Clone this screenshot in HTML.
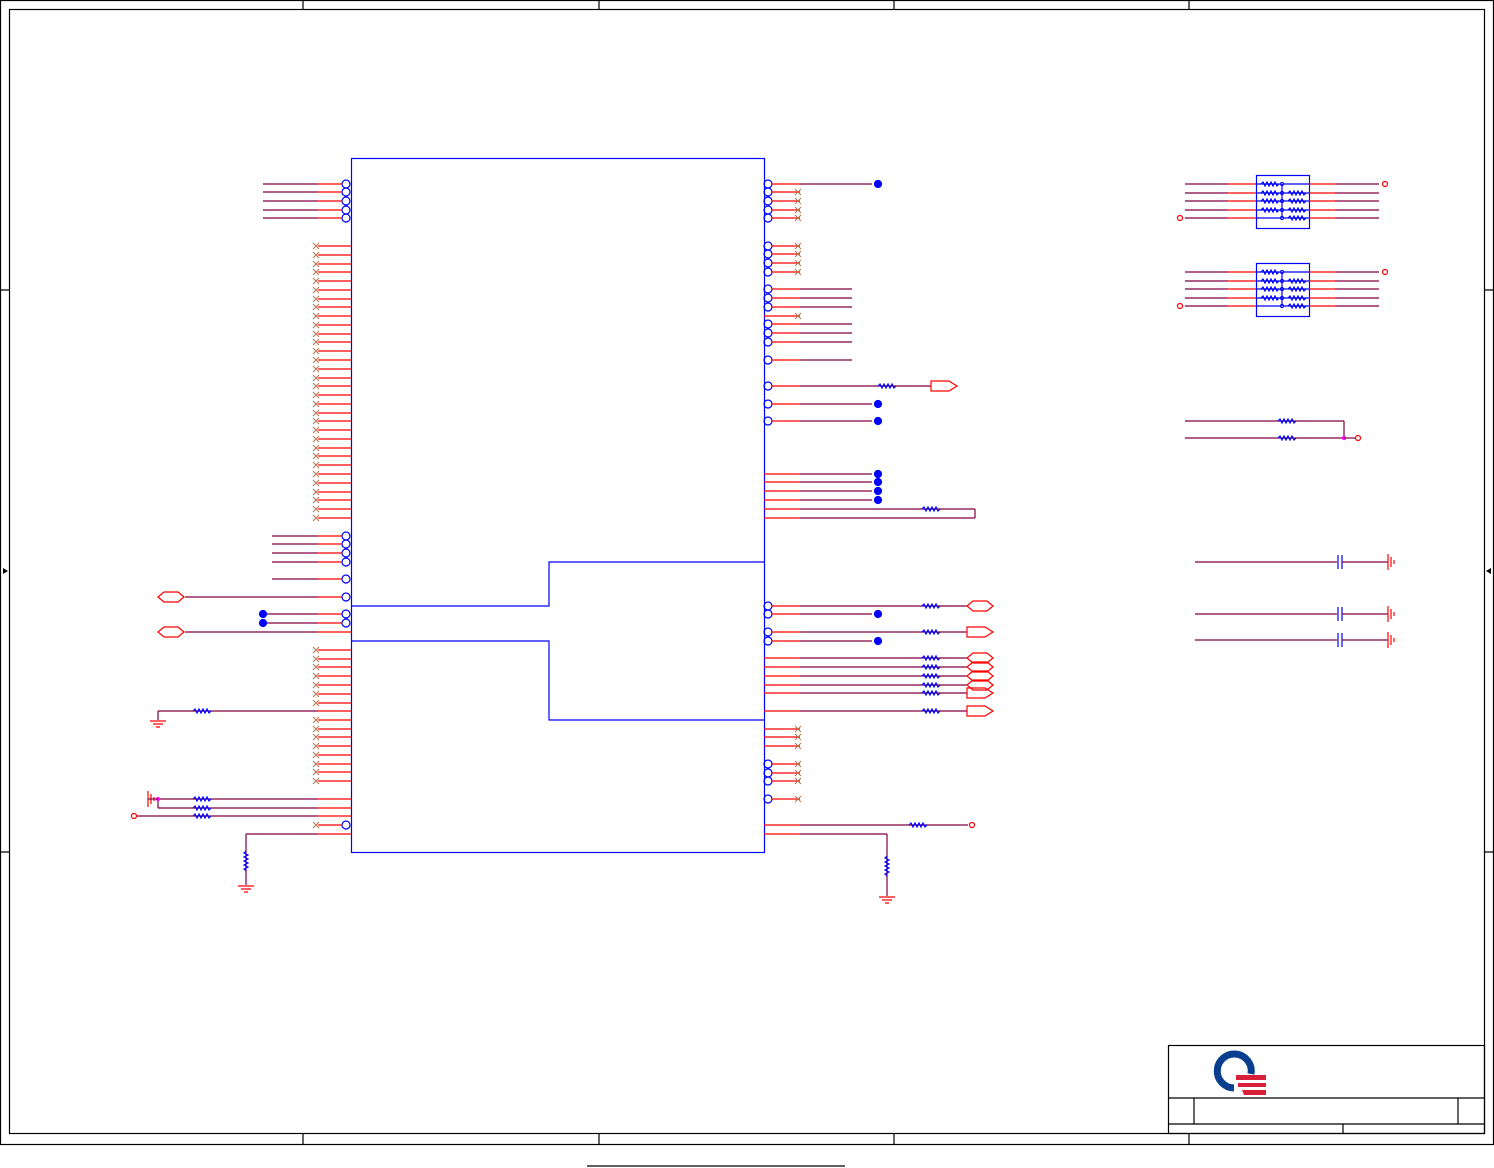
<!DOCTYPE html>
<html><head><meta charset="utf-8"><style>html,body{margin:0;padding:0;background:#fff}svg{display:block}</style></head>
<body>
<svg id="s" width="1494" height="1168" viewBox="0 0 1494 1168" xmlns="http://www.w3.org/2000/svg" fill="none" stroke-width="1">
<g stroke="#000" stroke-width="1.2">
<rect x="0.5" y="0.5" width="1493" height="1144"/>
<rect x="9.5" y="9.5" width="1475" height="1124"/>
<path d="M303 0v9M599 0v9M894 0v9M1189 0v9M303 1133v12M599 1133v12M894 1133v12M1189 1133v12M0 290h9M0 852h9M1485 290h9M1485 852h9M587 1166h258"/>
<rect x="1168.5" y="1045.5" width="316" height="88"/>
<path d="M1168 1098h316M1168 1124h316M1194 1098v26M1458 1098v26M1343 1124v9"/>
</g>
<path d="M3 568l5 3-5 3zM1491 568l-5 3 5 3z" fill="#000"/>
<!-- logo -->
<path d="M1234 1088 A17 17 0 1 1 1251 1074" stroke="#0a3f8f" stroke-width="7"/>
<path d="M1236 1075h30v5h-30zM1238 1083h28v4h-28zM1242 1090h24v5h-22z" fill="#d8203a"/>
<!-- main box -->
<g stroke="#00f" stroke-width="1.2">
<rect x="351.5" y="158.5" width="413" height="694"/>
<path d="M351 606h198v-44h215M351 641h198v79h215"/>
<rect x="1256.5" y="175.5" width="53" height="53"/>
<rect x="1256.5" y="263.5" width="53" height="53"/>
</g>
<g id="g"></g>
</svg>
<script>
const g=document.getElementById('g');const NS='http://www.w3.org/2000/svg';
function el(t,a){const e=document.createElementNS(NS,t);for(const k in a)e.setAttribute(k,a[k]);g.appendChild(e);return e;}
const R='#f00',M='#800040',B='#00f';
function ln(x1,y1,x2,y2,c){el('line',{x1,y1,x2,y2,stroke:c,'stroke-width':1.2});}
function circ(x,y,r,c,f){el('circle',{cx:x,cy:y,r,stroke:c,fill:f||'none','stroke-width':1.2});}
function X(x,y){el('path',{d:`M${x-3} ${y-3}l6 6M${x-3} ${y+3}l6 -6`,stroke:'#b07850','stroke-width':1});}
function res(x,y){el('path',{d:`M${x-9} ${y}l2 -2 2 4 2-4 2 4 2-4 2 4 2-4 2 4 2-2`,stroke:B,'stroke-width':1.2});}
function resV(x,y){el('path',{d:`M${x} ${y-10}l-2 2 4 2-4 2 4 2-4 2 4 2-4 2 4 2-4 2 2 2`,stroke:B,'stroke-width':1.2});}
function hexL(x,y){el('path',{d:`M${x} ${y}l6 -5h14l6 5-6 5h-14z`,stroke:R,'stroke-width':1.2});}
function hexR(x,y){el('path',{d:`M${x} ${y}l6 -5h14l6 5-6 5h-14z`,stroke:R,'stroke-width':1.2});}
function arr(x,y){el('path',{d:`M${x} ${y-5}h18l8 5-8 5h-18z`,stroke:R,'stroke-width':1.2});}
function gnd(x,y){el('path',{d:`M${x-8} ${y}h16M${x-5} ${y+3}h10M${x-2} ${y+6}h4`,stroke:R,'stroke-width':1.2});}
function gndR(x,y){el('path',{d:`M${x} ${y-8}v16M${x+3} ${y-5}v10M${x+6} ${y-2}v4`,stroke:R,'stroke-width':1.2});}
function lpin(y,x0,circle){ if(circle){circ(346,y,4,B);ln(318,y,342,y,R);}else{ln(318,y,351,y,R);} ln(x0,y,318,y,M);}
[184,192,201,210,218].forEach(y=>lpin(y,263,1));
for(let i=0;i<32;i++){let y=Math.round(246+i*8.77);ln(318,y,351,y,R);X(316,y);}
[536,544,553,562].forEach(y=>lpin(y,272,1));lpin(579,272,1);
lpin(597,185,1);hexL(158,597);
[614,623].forEach(y=>{lpin(y,263,1);circ(263,y,3.5,B,B);});
lpin(632,185,0);hexL(158,632);
[650,659,667,676,685,694,703].forEach(y=>{ln(318,y,351,y,R);X(316,y);});
lpin(711,158,0);res(202,711);ln(158,711,158,720,M);gnd(158,721);
for(let i=0;i<8;i++){let y=Math.round(720+i*8.7);ln(318,y,351,y,R);X(316,y);}
lpin(799,158,0);lpin(808,158,0);lpin(816,137,0);[799,808,816].forEach(y=>res(202,y));
ln(158,799,158,808,M);circ(158,799,1.5,'#f0f','#f0f');gndR(148,799);ln(148,799,158,799,M);circ(134,816,2.5,R);
circ(346,825,4,B);ln(318,825,342,825,R);X(316,825);
lpin(834,246,0);ln(246,834,246,885,M);resV(246,861);gnd(246,886);
function rpin(y,x1,circle){ if(circle){circ(768,y,4,B);ln(772,y,800,y,R);}else{ln(764,y,800,y,R);} if(x1>800)ln(800,y,x1,y,M);}
rpin(184,872,1);circ(878,184,3.5,B,B);
[192,201,210,218,246,254,263,272].forEach(y=>{rpin(y,0,1);X(798,y);});
[289,298,307,324,333,342,360].forEach(y=>rpin(y,852,1));
rpin(316,0,0);X(798,316);
rpin(386,931,1);res(887,386);arr(931,386);
[404,421].forEach(y=>{rpin(y,872,1);circ(878,y,3.5,B,B);});
[474,482,491,500].forEach(y=>{rpin(y,872,0);circ(878,y,3.5,B,B);});
rpin(509,975,0);res(931,509);rpin(518,975,0);ln(975,509,975,518,M);
rpin(606,967,1);res(931,606);hexR(967,606);
rpin(614,872,1);circ(878,614,3.5,B,B);
rpin(632,967,1);res(931,632);arr(967,632);
rpin(641,872,1);circ(878,641,3.5,B,B);
[658,667,676,685].forEach(y=>{rpin(y,967,0);res(931,y);hexR(967,y);});
[693,711].forEach(y=>{rpin(y,967,0);res(931,y);arr(967,y);});
[729,737,746].forEach(y=>{rpin(y,0,0);X(798,y);});
[764,773,781,799].forEach(y=>{rpin(y,0,1);X(798,y);});
rpin(825,968,0);res(918,825);circ(972,825,2.5,R);
rpin(834,887,0);ln(887,834,887,896,M);resV(887,866);gnd(887,897);
function net(y0){
 const ys=[y0,y0+9,y0+17,y0+26,y0+34];
 ys.forEach((y,i)=>{ln(1185,y,1228,y,M);ln(1228,y,1256,y,R);ln(1256,y,1309,y,B);ln(1309,y,1335,y,R);ln(1335,y,1379,y,M);});
 ys.forEach((y,i)=>{if(i<4)res(1270,y);if(i>0)res(1297,y);circ(1282,y,1.5,B,'#fff');});
 ln(1282,y0,1282,y0+34,B);
 circ(1385,y0,2.5,R);circ(1180,y0+34,2.5,R);
}
net(184);net(272);
[421,438].forEach(y=>{ln(1185,y,1344,y,M);res(1287,y);});ln(1344,421,1344,438,M);circ(1344,438,1.5,'#f0f','#f0f');ln(1344,438,1355,438,M);circ(1358,438,2.5,R);
[562,614,640].forEach(y=>{ln(1195,y,1337,y,M);el('path',{d:`M1338 ${y-7}v14M1342 ${y-7}v14`,stroke:B,'stroke-width':1.2});ln(1342,y,1388,y,M);gndR(1388,y);});
</script>
</body></html>
